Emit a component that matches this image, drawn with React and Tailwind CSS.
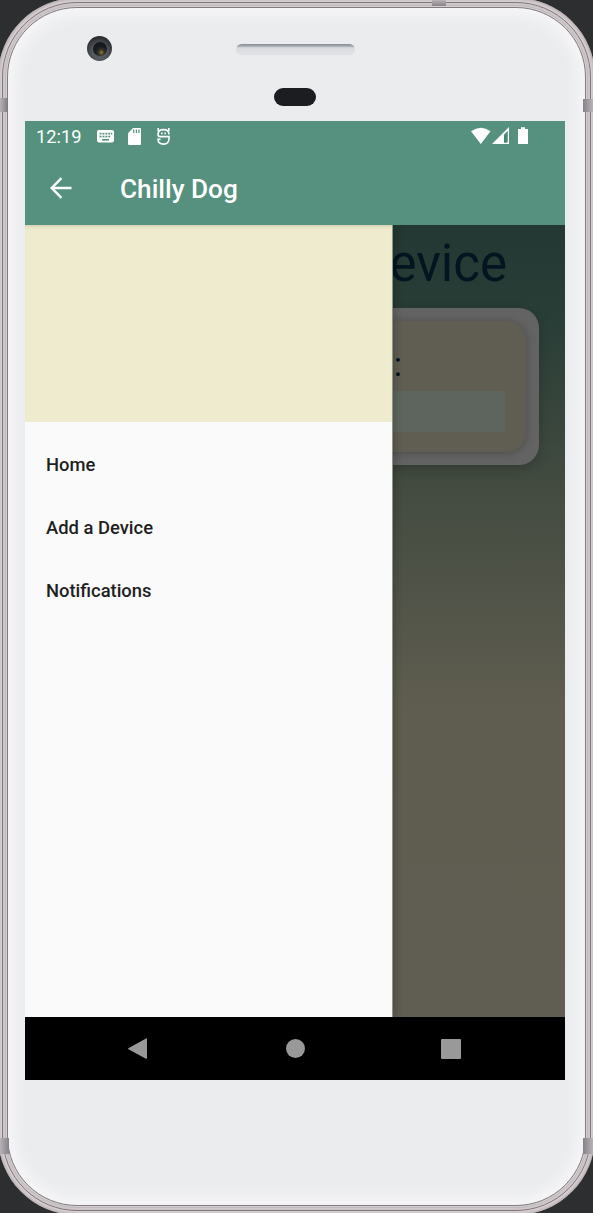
import React from "react";

function StatusIcons() {
  return (
    <>
      <svg className="ml-[15px]" width="17" height="13" viewBox="0 0 17 13">
        <rect width="17" height="12.4" rx="1.8" fill="#fff" />
        <g fill="#55917e">
          {[2.6, 5.5, 8.4, 11.3].map((x) => (
            <React.Fragment key={x}>
              <rect x={x} y="2.8" width="1.9" height="1.7" />
              <rect x={x} y="5.7" width="1.9" height="1.7" />
            </React.Fragment>
          ))}
          <rect x="14" y="2.8" width="1.2" height="1.7" />
          <rect x="5" y="9" width="7" height="1.6" />
        </g>
      </svg>
      <svg className="ml-[14px]" width="13" height="17" viewBox="0 0 13 17">
        <path d="M5 0H12q1 0 1 1V16q0 1-1 1H1q-1 0-1-1V5.2z" fill="#fff" />
        <path d="M5.7 1.6V5M8.4 1.6V5M11 1.6V5" stroke="#55917e" strokeWidth="1.2" />
      </svg>
      <svg className="ml-[16px]" width="13" height="17" viewBox="0 0 13 17" fill="none" stroke="#fff" strokeWidth="1.6">
        <path d="M1.2 0V3M11.8 0V3" />
        <path d="M12 6.4C12 3 10 1.6 6.5 1.6S1 3 1 6.2Q1 8.6 3.2 8.6H12V10.8C12 14.4 10 16.1 6.5 16.1S1 14.4 1 11.2H3.6" />
        <path d="M4 5.4h1.6M7.4 5.4H9" />
      </svg>
    </>
  );
}

function SignalIcons() {
  return (
    <svg width="58" height="18" viewBox="0 0 58 18" fill="#fff">
      <path d="M0 4.3Q10-3 19.5 4.3L9.8 17z" />
      <path d="M21 17L38 0V17z" />
      <path d="M33 7.6L36.8 3.8V15.4H33z" fill="#55917e" />
      <path d="M33 9.2L35.6 6.8V15.4H33z" fill="#48866f" />
      <path d="M47 2h3V.3h4V2h3V17H47z" />
    </svg>
  );
}

function Header() {
  return (
    <header className="relative h-[104px] bg-[#55917e] text-white">
      <div className="flex h-[31px] items-center pl-[11px] pr-[36px]">
        <span className="mt-px text-[18.3px] leading-none">12:19</span>
        <StatusIcons />
        <div className="ml-auto -mt-[1px]">
          <SignalIcons />
        </div>
      </div>
      <div className="flex h-[73px] items-center pl-[25px]">
        <svg className="-mt-[2px]" width="22" height="22" viewBox="0 0 22 22" fill="none" stroke="#fff" strokeWidth="2.4">
          <path d="M21.5 11H2M11.5 1.2L1.7 11L11.5 20.8" />
        </svg>
        <h1 className="mt-[2px] ml-[48px] text-[26.2px] leading-none font-medium">Chilly Dog</h1>
      </div>
    </header>
  );
}

function Drawer() {
  return (
    <nav className="relative w-[368px] shrink-0 border-r border-[#8e9687] bg-[#fafafa] shadow-[2px_0_8px_rgba(0,0,0,0.2)]">
      <div className="h-[197px] bg-[#efebce] shadow-[inset_0_4px_4px_-3px_rgba(0,0,0,0.15)]" />
      <ul className="flex flex-col pt-[11px] text-[18.4px] font-medium text-[#1f1f1f]">
        {["Home", "Add a Device", "Notifications"].map((label) => (
          <li key={label} className="flex h-[63px] items-center pl-[21px]">
            {label}
          </li>
        ))}
      </ul>
    </nav>
  );
}

function DevicePage() {
  return (
    <main className="flex min-w-0 flex-1 flex-col items-end overflow-hidden bg-[linear-gradient(180deg,#233832_0%,#293e37_12%,#434b40_33%,#5f5d50_61%,#605e52_100%)]">
      <h2 className="mr-[58px] flex h-[83px] items-center text-[51px] leading-none whitespace-nowrap text-[#041420]">
        <span className="-mt-[7px]">Add a Device</span>
      </h2>
      <section className="mr-[26px] h-[157px] w-[400px] shrink-0 rounded-[20px] bg-[#636363] p-[13px] shadow-[0_3px_12px_rgba(0,0,0,0.22)]">
        <div className="flex h-[131px] flex-col items-end rounded-[20px] bg-[#605e52] pr-[21px] shadow-[0_1px_9px_rgba(0,0,0,0.25)]">
          <div className="mr-[103px] flex h-[70px] items-center text-[34px] text-[#041420]">
            <span className="mt-[16px] flex leading-none">
              <span className="mr-[1px]">Name</span>:
            </span>
          </div>
          <div className="h-[41px] w-[320px] bg-[#5e645e]" />
        </div>
      </section>
    </main>
  );
}

function NavigationBar() {
  return (
    <footer className="flex h-[63px] items-center bg-black pl-[102px]">
      <svg width="22" height="24" viewBox="0 0 22 24" fill="#999">
        <path d="M1.4 11.3L19 1.4q1-.3 1 .7V21q0 1-1 .7L1.4 12.3q-.8-.5 0-1z" />
      </svg>
      <div className="ml-[136.5px] size-[19px] rounded-full bg-[#999]" />
      <div className="ml-[136px] size-[20px] rounded-[1px] bg-[#999]" />
    </footer>
  );
}

function FrameBand({ className }) {
  return <div className={`absolute from-[#87818a] to-[#b9b3b7] ${className}`} />;
}

export default function App() {
  return (
    <div className="h-[1213px] w-[593px] overflow-hidden bg-[#2c2e30] font-[Roboto,sans-serif]">
      <div className="relative -mx-[2px] -mt-[2px] h-[1217px] rounded-[79px] bg-[#ddd6d8] p-[4px] shadow-[inset_0_0_4px_1px_#a99fa2]">
        <div className="h-full rounded-[75px] border border-[#81777a] bg-[#cec7c9] p-[2px]">
          <div className="h-full rounded-[72px] border border-[#c0b8bb] bg-[#d6d0d2] p-px">
            <div className="h-full rounded-[70px] border border-[#817b7d] bg-[#ebecee] px-[18px] pt-[113px] shadow-[inset_0_0_13px_7px_#f6f6f8]">
              <div className="-ml-px flex h-[959px] w-[540px] flex-col bg-black">
                <Header />
                <div className="flex h-[792px] overflow-hidden">
                  <Drawer />
                  <DevicePage />
                </div>
                <NavigationBar />
              </div>
            </div>
          </div>
        </div>

        <FrameBand className="top-[2px] left-[434px] h-[6px] w-[14px] bg-gradient-to-t" />
        <FrameBand className="top-[100px] left-[2px] h-[14px] w-[7px] bg-gradient-to-l" />
        <FrameBand className="top-[101px] right-[2px] h-[13px] w-[10px] bg-gradient-to-r" />
        <FrameBand className="top-[1140px] left-[2px] h-[16px] w-[9px] bg-gradient-to-l" />
        <FrameBand className="top-[1140px] right-[2px] h-[16px] w-[10px] bg-gradient-to-r" />

        <div className="absolute top-[38px] left-[89px] flex size-[25px] items-center justify-center rounded-full bg-[radial-gradient(circle_at_50%_65%,#555960_35%,#292b2e_75%)]">
          <div className="size-[14px] rounded-full bg-[radial-gradient(circle_at_60%_75%,#8b813b_0%,#363323_22%,#181b23_45%,#16171b_100%)]" />
        </div>
        <div className="absolute top-[46px] left-[238px] h-[11px] w-[119px] rounded-full border-b border-[#dedfe2] bg-[linear-gradient(180deg,#858b94_0%,#aeb2b9_25%,#d9dbdf_38%,#e1e2e5_100%)]" />
        <div className="absolute top-[90px] left-[276px] h-[18px] w-[42px] rounded-full bg-[#1b1d21]" />
      </div>
    </div>
  );
}
